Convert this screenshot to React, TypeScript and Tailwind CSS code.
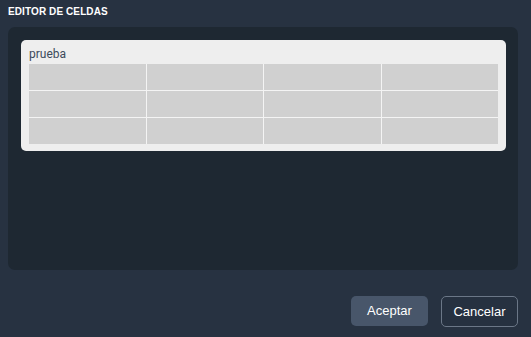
export default function App() {
  const rows = [0, 1, 2];
  const cols = [0, 1, 2, 3];

  return (
    <div className="w-[531px] h-[337px] bg-[#273241] flex flex-col font-['Liberation_Sans',Arial,sans-serif]">
      <div className="h-[27px] px-2 pt-[6px]">
        <h2 className="text-[10px] leading-[11px] font-bold text-white tracking-[0.1px]">EDITOR DE CELDAS</h2>
      </div>

      <div className="mx-2 w-[510px] h-[243px] rounded-[7px] bg-[#1e2832] p-[13px]">
        <div className="w-[485px] rounded-[5px] bg-[#eeeeee] px-2 pt-[5px] pb-[7px]">
          <div className="text-[12px] leading-[19px] text-[#3d4b5c] font-['Roboto',sans-serif]">prueba</div>
          <div className="grid grid-cols-4 gap-px bg-[#f4f4f4]">
            {rows.map((r) =>
              cols.map((c) => (
                <div key={`${r}-${c}`} className="h-[26px] bg-[#d0d0d0]" />
              ))
            )}
          </div>
        </div>
      </div>

      <div className="flex justify-end gap-[13px] pr-[13px] pt-[26px]">
        <button className="w-[77px] h-[30px] rounded-[5px] bg-[#48566a] text-white text-[13px] font-medium">
          Aceptar
        </button>
        <button className="w-[77px] h-[31px] rounded-[5px] border border-[#6b7787] bg-[#263140] text-white text-[13px] font-medium">
          Cancelar
        </button>
      </div>
    </div>
  );
}
